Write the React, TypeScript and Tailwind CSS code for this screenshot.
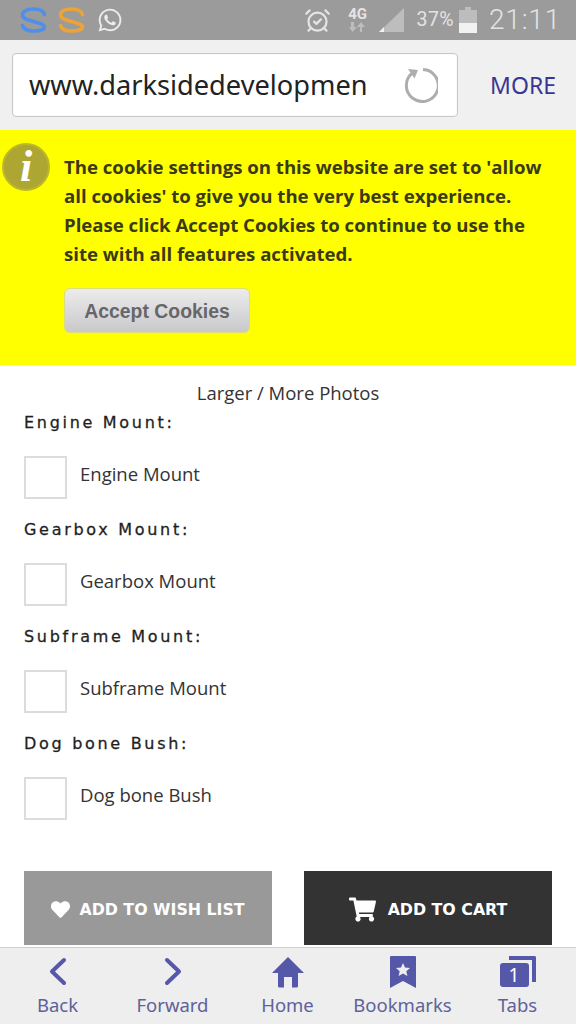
import { AlarmClockCheck } from "lucide-react"
import { FaHeart, FaShoppingCart, FaWhatsapp } from "react-icons/fa"

const options = ["Engine Mount", "Gearbox Mount", "Subframe Mount", "Dog bone Bush"]

function SwirlS({ color }: { color: string }) {
    return (
        <svg width="27" height="26" viewBox="0 0 27 26" fill="none" stroke={color} strokeWidth="3.6" strokeLinecap="round" strokeLinejoin="round">
            <path d="M24.500 7.500C23.500 3.500 18.500 2 13.500 2C7 2 2.500 4.500 2.500 8C2.500 10 4 11.500 7 12.500L20 16.500C23 17.500 24.500 18.500 24.500 20C24.500 22.500 19.500 24 13.500 24C8 24 3.500 22.500 2.500 18.500" />
        </svg>
    )
}

function StatusBar() {
    return (
        <div className="h-10 bg-[#9b9b9b] flex items-center shrink-0 pl-[20px] pr-[15px] text-[#e4e4e4]">
            <SwirlS color="#4f8fea" />
            <div className="ml-[11px]"><SwirlS color="#eda338" /></div>
            <FaWhatsapp className="ml-[12px] text-[#ececec]" size={26} />
            <div className="ml-auto flex items-center">
                <AlarmClockCheck size={27} strokeWidth={2} />
                <div className="ml-[16px] flex flex-col items-center leading-none w-[22px] -mt-[2px]">
                    <span className="text-[15px] font-bold font-['Roboto',sans-serif] leading-[15px]">4G</span>
                    <svg width="18" height="10" viewBox="0 0 18 10" fill="#bdbdbd">
                        <path d="M2 0h3v5h3L3.500 10L0 5h2zM11 5h-3l4-5l4 5h-3v5h-2z" />
                    </svg>
                </div>
                <svg className="ml-[8px]" width="28" height="28" viewBox="0 0 28 28">
                    <path d="M27 2V26H2z" fill="#bdbdbd" />
                    <path d="M2 26l5-5v5z" fill="#f2f2f2" />
                </svg>
                <span className="ml-[12px] text-[19.500px] font-['Roboto',sans-serif] tracking-[0.4px]">37%</span>
                <svg className="ml-[5px]" width="18" height="26" viewBox="0 0 18 26">
                    <path d="M6 0h6v3h6v23H0V3h6z" fill="#bdbdbd" />
                    <path d="M0 16h18v10H0z" fill="#f2f2f2" />
                </svg>
                <span className="ml-[12px] text-[28px] tracking-[0.8px] font-['Roboto',sans-serif] font-light">21:11</span>
            </div>
        </div>
    )
}

function AddressBar() {
    return (
        <div className="h-[90px] bg-[#f0f0f0] flex items-center shrink-0 pl-3 pr-5">
            <div className="w-[446px] h-16 bg-white border border-[#c8c8c8] rounded-[4px] flex items-center pl-4 pr-[19px] shadow-[inset_0_0_2px_rgba(0,0,0,0.08)]">
                <span className="text-[27.200px] text-[#222] font-['Noto_Sans',sans-serif] whitespace-nowrap">www.darksidedevelopmen</span>
                <svg className="ml-auto" width="36" height="36" viewBox="0 0 36 36" fill="none">
                    <path d="M11 5.500A16 16 0 1 0 21 2.500" stroke="#adadad" strokeWidth="3" />
                    <path d="M6 2l10 1l-3.500 8.500z" fill="#adadad" />
                </svg>
            </div>
            <span className="ml-auto text-[23px] text-[#3a3593] font-['Noto_Sans',sans-serif]">MORE</span>
        </div>
    )
}

function CookieBanner() {
    return (
        <div className="h-[235px] bg-[#ffff00] shrink-0 relative pl-16 pt-[22px]">
            <div className="absolute left-[2px] top-[13px] w-[48px] h-[48px] rounded-full bg-[#aea633] border-2 border-[#bdb827] flex items-center justify-center">
                <span className="text-white text-[44px] font-bold italic font-['Liberation_Serif',serif] leading-none">i</span>
            </div>
            <p className="text-[18.600px] leading-[29px] font-bold text-[#3a3a14] font-['Open_Sans',sans-serif] w-[490px]">
                The cookie settings on this website are set to 'allow all cookies' to give you the very best experience. Please click Accept Cookies to continue to use the site with all features activated.
            </p>
            <button className="mt-[20px] pt-[2px] w-[186px] h-[45px] rounded-[6px] bg-gradient-to-b from-[#ececec] to-[#c9c9cc] border border-[#dcdc80] text-[19.400px] font-bold text-[#66666b] font-['Liberation_Sans',sans-serif]">
                Accept Cookies
            </button>
        </div>
    )
}

function OptionGroup({ name }: { name: string }) {
    return (
        <div className="h-[107px]">
            <div className="pt-[1px] text-[16px] leading-[22px] tracking-[2.700px] text-[#1f1f1f] [-webkit-text-stroke:0.3px_#1f1f1f] font-['DejaVu_Sans',sans-serif]">{name}:</div>
            <div className="mt-[22px] flex items-center">
                <div className="w-[43px] h-[43px] border-2 border-[#dcdcdc] bg-white" />
                <span className="ml-[13px] mb-[8px] text-[18.500px] text-[#333] font-['Open_Sans',sans-serif]">{name}</span>
            </div>
        </div>
    )
}

function NavItem({ label, icon }: { label: string; icon: React.ReactNode }) {
    return (
        <div className="flex flex-col items-center w-[115px]">
            <div className="h-[36px] flex items-center justify-center">{icon}</div>
            <span className="mt-[2px] text-[18.500px] leading-[26px] text-[#60619a] font-['Noto_Sans',sans-serif]">{label}</span>
        </div>
    )
}

function BottomBar() {
    return (
        <div className="h-[77px] shrink-0 bg-[#eeeeee] border-t border-[#d0d0d0] flex pt-[6px]">
            <NavItem label="Back" icon={
                <svg width="20" height="30" viewBox="0 0 20 30" fill="none" stroke="#5558a8" strokeWidth="4" strokeLinecap="round" strokeLinejoin="round"><path d="M16 3L4 14.500l12 11.500" /></svg>
            } />
            <NavItem label="Forward" icon={
                <svg width="20" height="30" viewBox="0 0 20 30" fill="none" stroke="#5558a8" strokeWidth="4" strokeLinecap="round" strokeLinejoin="round"><path d="M4 3l12 11.500L4 26" /></svg>
            } />
            <NavItem label="Home" icon={
                <svg width="34" height="32" viewBox="0 0 34 32" fill="#5558a8"><path d="M17 1L33 17H27V30a1.500 1.500 0 0 1-1.500 1.500H21V21H13V31.500H8.500A1.500 1.500 0 0 1 7 30V17H1z" /></svg>
            } />
            <NavItem label="Bookmarks" icon={
                <svg width="26" height="32" viewBox="0 0 26 32" fill="#5558a8"><path fillRule="evenodd" d="M1 0H25a1 1 0 0 1 1 1V32L13 25L0 32V1a1 1 0 0 1 1-1zM13 7l2 4.500 5 .5-3.700 3.200 1.100 4.800L13 17.500 8.600 20l1.100-4.800L6 12l5-.5z" /></svg>
            } />
            <NavItem label="Tabs" icon={
                <div className="relative w-[36px] h-[32px]">
                    <div className="absolute right-0 top-0 w-[27px] h-[26px] border-t-[4px] border-r-[4px] border-[#5558a8] rounded-tr-[2px]" />
                    <div className="absolute left-0 bottom-[1px] w-[29px] h-[24px] bg-[#5558a8] rounded-[3px] flex items-center justify-center text-white text-[19px] font-['Noto_Sans',sans-serif]">1</div>
                </div>
            } />
        </div>
    )
}

export default function App() {
    return (
        <div className="w-[576px] h-[1024px] flex flex-col overflow-hidden bg-white">
            <StatusBar />
            <AddressBar />
            <CookieBanner />
            <main className="flex-1 overflow-hidden px-6 pt-[15px]">
                <div className="text-center text-[18.500px] leading-[26px] text-[#333] font-['Open_Sans',sans-serif]">Larger / More Photos</div>
                <div className="mt-[5px]">
                    {options.map((name) => <OptionGroup key={name} name={name} />)}
                </div>
                <div className="mt-[32px] flex justify-between w-[528px]">
                    <button className="w-[248px] h-[74px] pt-[3px] bg-[#999999] text-white flex items-center justify-center gap-[9px] text-[15.800px] font-bold font-['DejaVu_Sans',sans-serif]">
                        <FaHeart size={19} />
                        ADD TO WISH LIST
                    </button>
                    <button className="w-[248px] h-[74px] pt-[3px] bg-[#333333] text-white flex items-center justify-center gap-[12px] text-[15.800px] font-bold font-['DejaVu_Sans',sans-serif]">
                        <FaShoppingCart size={27} />
                        ADD TO CART
                    </button>
                </div>
            </main>
            <BottomBar />
        </div>
    )
}
